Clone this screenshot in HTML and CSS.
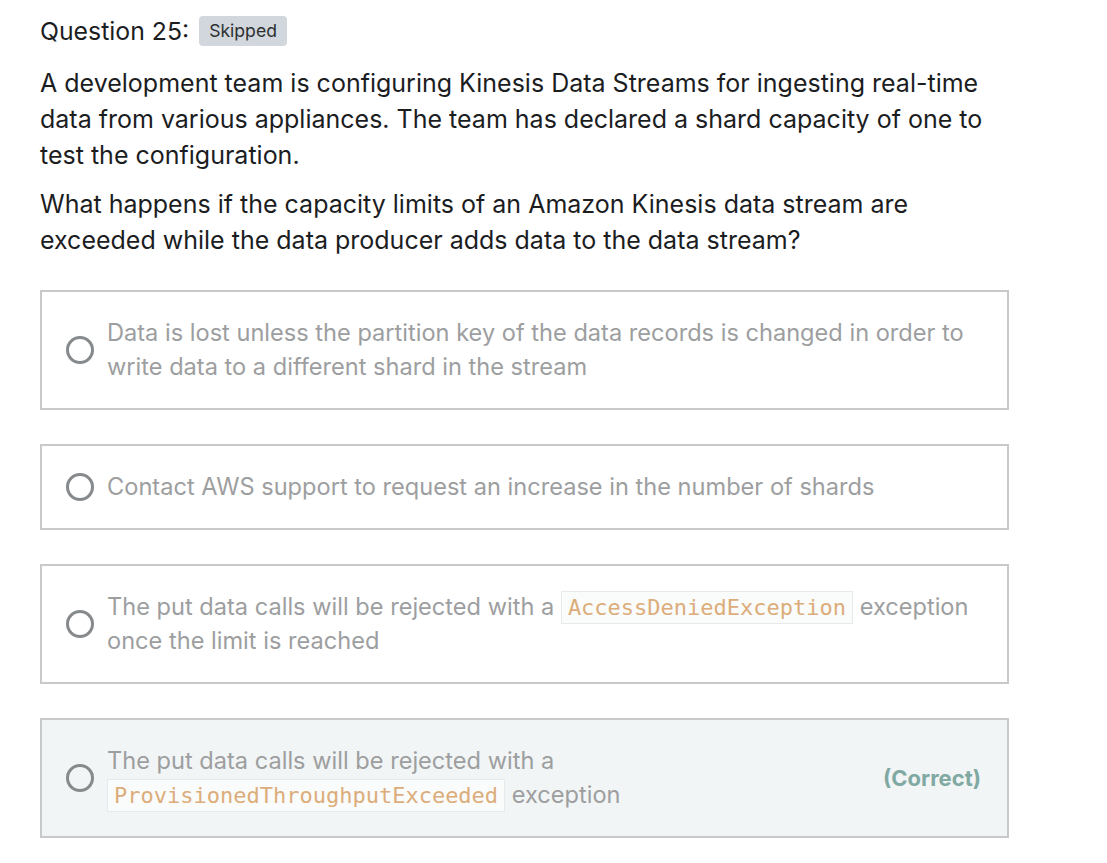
FILE: index.html
```html
<!DOCTYPE html>
<html>
<head>
<meta charset="utf-8">
<link rel="stylesheet" href="styles.css">
</head>
<body>
<div class="page">
  <div class="qhead">
    <span class="qtitle">Question 25:</span>
    <span class="badge">Skipped</span>
  </div>
  <p class="prompt">A development team is configuring Kinesis Data Streams for ingesting real-time data from various appliances. The team has declared a shard capacity of one to test the configuration.</p>
  <p class="prompt second">What happens if the capacity limits of an Amazon Kinesis data stream are exceeded while the data producer adds data to the data stream?</p>

  <div class="options">
    <div class="option">
      <span class="radio"></span>
      <div class="otext">Data is lost unless the partition key of the data records is changed in order to write data to a different shard in the stream</div>
    </div>
    <div class="option">
      <span class="radio"></span>
      <div class="otext">Contact AWS support to request an increase in the number of shards</div>
    </div>
    <div class="option">
      <span class="radio"></span>
      <div class="otext">The put data calls will be rejected with a <code>AccessDeniedException</code> exception once the limit is reached</div>
    </div>
    <div class="option correct">
      <span class="radio"></span>
      <div class="otext">The put data calls will be rejected with a<br><code>ProvisionedThroughputExceeded</code> exception</div>
      <span class="mark">(Correct)</span>
    </div>
  </div>
</div>
</body>
</html>
```
FILE: styles.css
```css
html, body {
  margin: 0;
  padding: 0;
  background: #ffffff;
}
body {
  font-family: Inter, "Open Sans", "Liberation Sans", sans-serif;
  color: #1c1d1f;
}
.page {
  width: 969px;
  padding: 14px 0 0 40px;
}
.qhead {
  display: flex;
  align-items: center;
  gap: 10px;
  height: 34px;
}
.qtitle {
  font-size: 24.8px;
}
.badge {
  background: #d1d7dc;
  color: #2d2f31;
  font-size: 17.6px;
  padding: 0 10px;
  height: 30px;
  line-height: 30px;
  border-radius: 4px;
}
.prompt {
  font-size: 25px;
  line-height: 36px;
  margin: 17px 0 0 0;
}
.prompt.second {
  margin-top: 13px;
}
.options {
  display: flex;
  flex-direction: column;
  gap: 34px;
  margin-top: 32px;
}
.option {
  display: flex;
  align-items: center;
  border: 2px solid #c8c9ca;
  padding: 24px 26px 24px 24px;
  gap: 13px;
  min-height: 34px;
}
.option.correct {
  background: #f2f5f5;
}
.radio {
  flex: none;
  width: 22px;
  height: 22px;
  border: 3px solid #868a8d;
  border-radius: 50%;
  box-sizing: content-box;
}
.otext {
  flex: 1;
  font-size: 23.6px;
  line-height: 34px;
  color: #9d9e9f;
}
code {
  display: inline-block;
  font-family: "DejaVu Sans Mono", "Liberation Mono", monospace;
  font-size: 22px;
  line-height: 31px;
  color: #dcad7a;
  background: #fafbfb;
  border: 1px solid #e7eaec;
  padding: 0 6px;
  vertical-align: top;
  margin-top: 1px;
}
.mark {
  flex: none;
  font-size: 22px;
  font-weight: 700;
  color: #7fa9a2;
}
```
